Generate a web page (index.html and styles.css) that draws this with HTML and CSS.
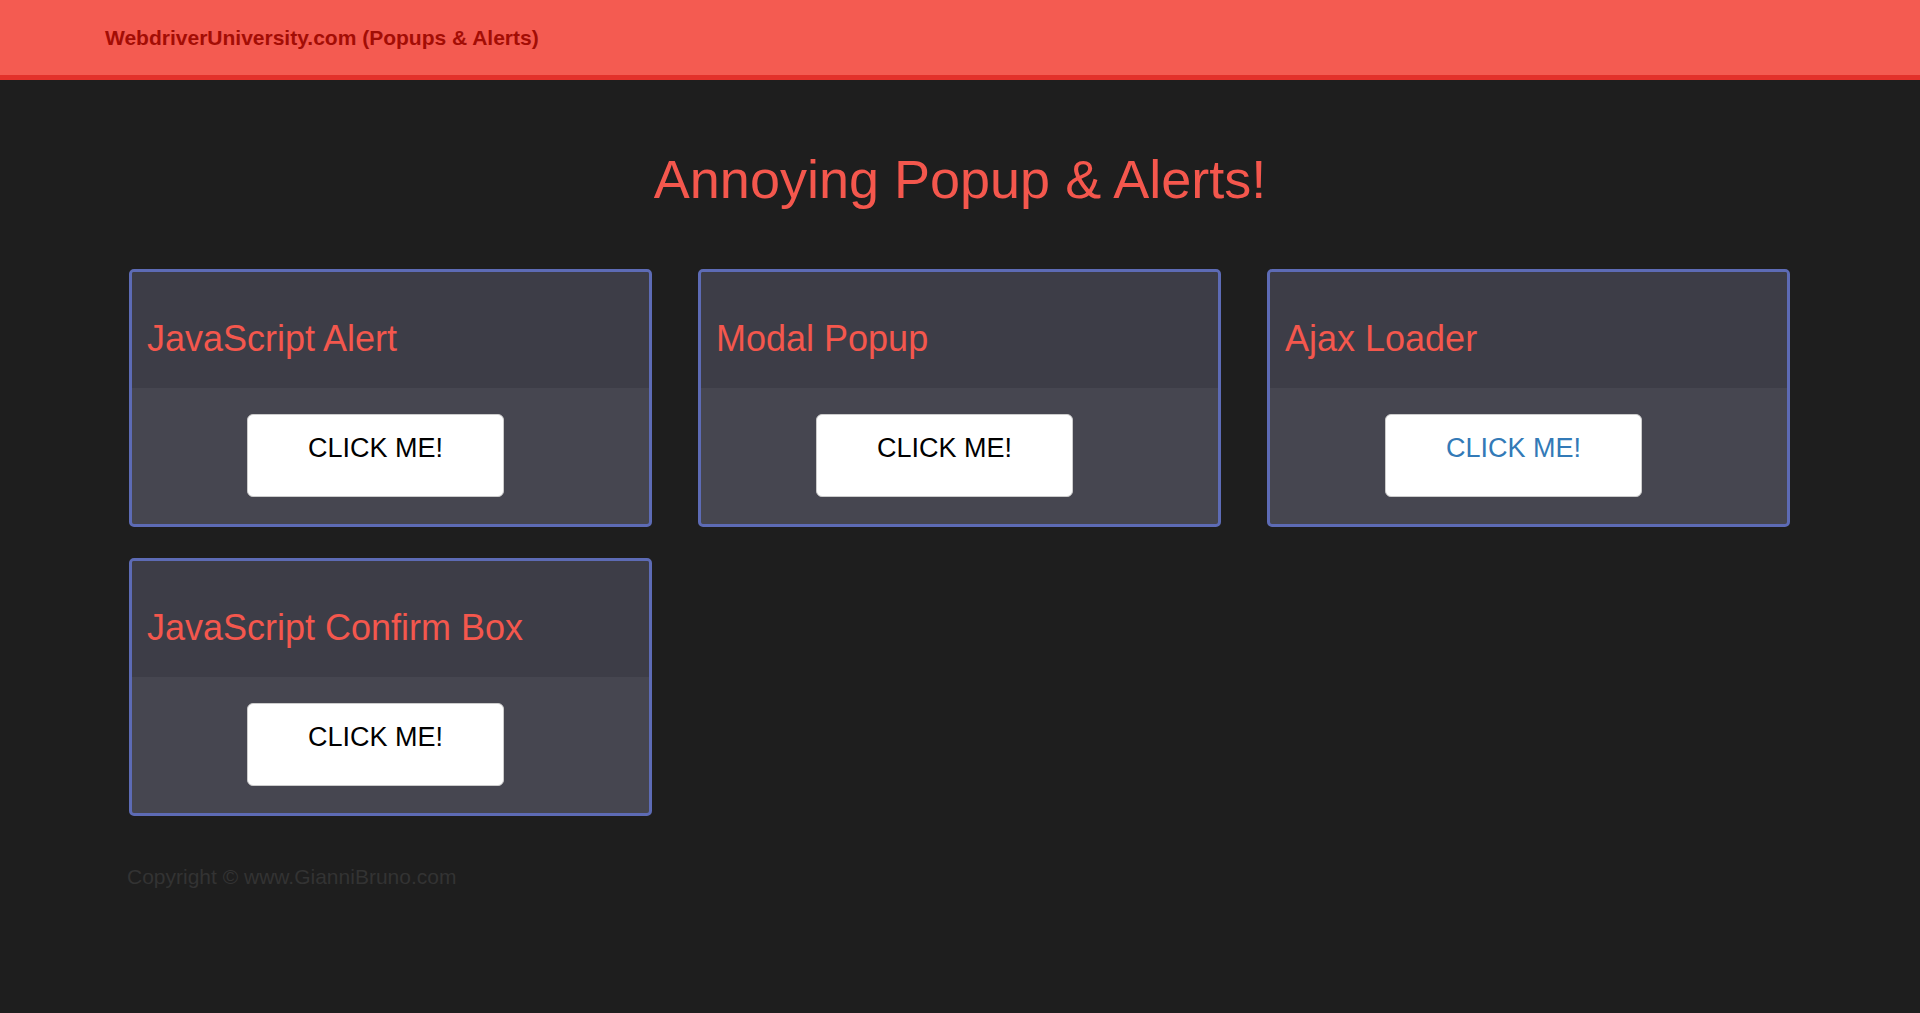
FILE: index.html
```html
<!DOCTYPE html>
<html>
<head>
<meta charset="utf-8">
<title>WebdriverUniversity.com (Popups &amp; Alerts)</title>
<link rel="stylesheet" href="styles.css">
</head>
<body>
<nav class="navbar">
  <span class="brand">WebdriverUniversity.com (Popups &amp; Alerts)</span>
</nav>
<h1 class="page-title">Annoying Popup &amp; Alerts!</h1>
<div class="grid">
  <div class="card">
    <div class="card-head"><h2>JavaScript Alert</h2></div>
    <div class="card-body"><span class="btn">CLICK ME!</span></div>
  </div>
  <div class="card">
    <div class="card-head"><h2>Modal Popup</h2></div>
    <div class="card-body"><span class="btn">CLICK ME!</span></div>
  </div>
  <div class="card">
    <div class="card-head"><h2>Ajax Loader</h2></div>
    <div class="card-body"><span class="btn btn-link">CLICK ME!</span></div>
  </div>
  <div class="card">
    <div class="card-head"><h2>JavaScript Confirm Box</h2></div>
    <div class="card-body"><span class="btn">CLICK ME!</span></div>
  </div>
</div>
<footer class="footer">Copyright © www.GianniBruno.com</footer>
</body>
</html>
```
FILE: styles.css
```css
html, body {
  margin: 0;
  padding: 0;
}
body {
  background: #1e1e1e;
  font-family: "Liberation Sans", Arial, sans-serif;
  min-height: 1013px;
}
.navbar {
  height: 75px;
  background: #f45b51;
  border-bottom: 5px solid #e3312a;
  display: flex;
  align-items: center;
  padding-left: 105px;
}
.brand {
  color: #a30d05;
  font-weight: bold;
  font-size: 21px;
}
.page-title {
  margin: 70px 0 0;
  text-align: center;
  color: #f4574d;
  font-weight: normal;
  font-size: 54px;
  line-height: 59px;
}
.grid {
  display: grid;
  grid-template-columns: repeat(3, 523px);
  column-gap: 46px;
  row-gap: 31px;
  padding-left: 129px;
  margin-top: 60px;
}
.card {
  border: 3px solid #5d6bb5;
  border-radius: 5px;
  overflow: hidden;
  background: #464650;
}
.card-head {
  background: #3d3d47;
  padding: 47px 15px 29px;
}
.card-head h2 {
  margin: 0;
  font-weight: normal;
  font-size: 36px;
  line-height: 40px;
  color: #f4574d;
}
.card-body {
  padding: 26px 0 27px 115px;
}
.btn {
  display: block;
  box-sizing: border-box;
  width: 257px;
  height: 83px;
  padding-top: 18px;
  background: #fff;
  border: 1px solid #cccccc;
  border-radius: 6px;
  text-align: center;
  font-size: 27px;
  line-height: 30px;
  color: #000;
}
.btn-link {
  color: #337ab7;
}
.footer {
  padding-left: 127px;
  margin-top: 46px;
  font-size: 21px;
  line-height: 30px;
  color: #333333;
}
```
